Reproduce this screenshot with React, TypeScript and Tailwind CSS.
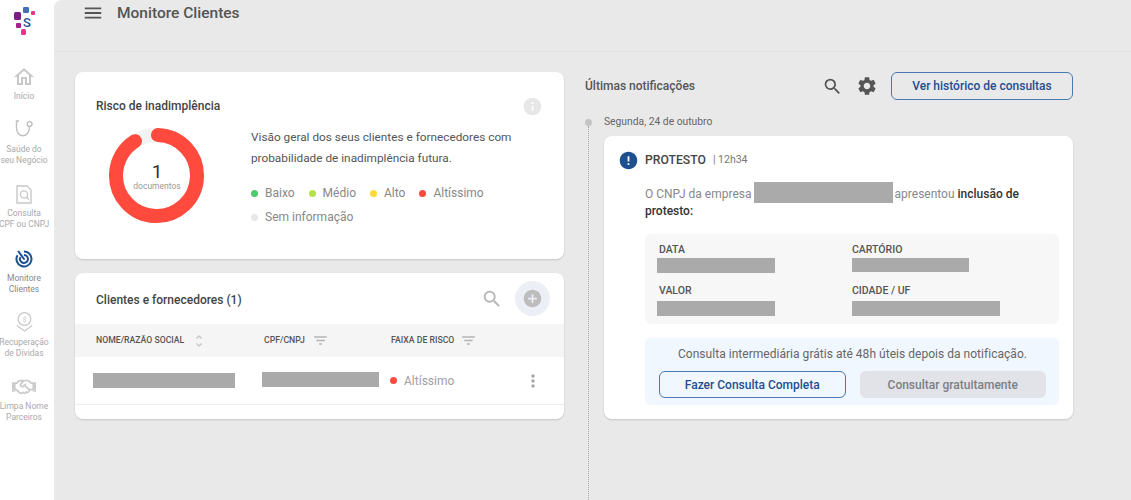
import React from 'react';
import { FaRegHandshake } from 'react-icons/fa';
import {
  MdAddCircle,
  MdError,
  MdFilterList,
  MdInfo,
  MdMenu,
  MdMoreVert,
  MdOutlineHome,
  MdSearch,
  MdSettings,
  MdUnfoldMore,
} from 'react-icons/md';

const Logo = () => (
  <svg width="22" height="29" viewBox="0 0 22 29" className="block">
    <rect x="1" y="6" width="7" height="8" rx="1.5" fill="#7b1f87" />
    <rect x="10" y="1" width="6" height="6" rx="1.2" fill="#3f6fb5" />
    <rect x="18" y="5" width="4" height="4" rx="1" fill="#e6348f" />
    <rect x="3" y="17" width="5" height="5" rx="1" fill="#a3238e" />
    <rect x="8" y="23" width="5" height="6" rx="1.5" fill="#e6348f" />
    <text x="10" y="21" fontSize="13" fontWeight="500" fill="#1d4f91" fontFamily="Roboto, sans-serif">
      S
    </text>
  </svg>
);

const StethoscopeIcon = () => (
  <svg width="18" height="17" viewBox="0 0 18 17" fill="none" stroke="#c0c0c0" strokeWidth="1.4">
    <path d="M4 1H1.5v7a6.4 7.8 0 0 0 12.8 0V6.6" />
    <circle cx="14.6" cy="4" r="2.4" />
  </svg>
);

const ConsultaIcon = () => (
  <svg width="16" height="19" viewBox="0 0 16 19" fill="none" stroke="#c8c8c8" strokeWidth="1.4">
    <path d="M1 1h10l4 4v13H1z" />
    <circle cx="8" cy="9.5" r="3.6" />
    <path d="M10.6 12.2l2.4 2.4" />
  </svg>
);

const MonitorIcon = () => (
  <svg width="18" height="18" viewBox="0 0 18 18" fill="none" stroke="#1d4f91" strokeWidth="2">
    <path d="M9 1.5A7.5 7.5 0 1 1 2.5 5.25" />
    <path d="M9 5A4 4 0 1 1 5.5 7" />
    <path d="M3.5 1.5L9 9" strokeLinecap="round" />
  </svg>
);

const RecoveryIcon = () => (
  <svg width="17" height="20" viewBox="0 0 17 20" fill="none" stroke="#c8c8c8" strokeWidth="1.3">
    <circle cx="8.5" cy="7" r="6.3" />
    <path d="M0.8 13.5l7.7 5.5 7.7-5.5" />
    <text x="8.5" y="9.5" fontSize="7" textAnchor="middle" fill="#c8c8c8" stroke="none" fontFamily="Roboto, sans-serif">
      $
    </text>
  </svg>
);

const navItems = [
  { icon: <MdOutlineHome size={24} color="#c8c8c8" />, lines: ['Início'], h: 'h-[51px]', lh: 'mt-[2px]' },
  { icon: <StethoscopeIcon />, lines: ['Saúde do', 'seu Negócio'], h: 'h-[66px]', lh: 'mt-[4px]' },
  { icon: <ConsultaIcon />, lines: ['Consulta', 'CPF ou CNPJ'], h: 'h-[65px]', lh: 'mt-[2px]' },
  { icon: <MonitorIcon />, lines: ['Monitore', 'Clientes'], h: 'h-[63px]', lh: 'mt-[2px]', active: true },
  { icon: <RecoveryIcon />, lines: ['Recuperação', 'de Dívidas'], h: 'h-[65px]', lh: 'mt-[3px]' },
  { icon: <FaRegHandshake size={24} color="#cccccc" />, lines: ['Limpa Nome', 'Parceiros'], h: 'h-[60px]', lh: 'mt-[2px]' },
];

const legend = [
  { label: 'Baixo', color: 'bg-[#4fcb6b]' },
  { label: 'Médio', color: 'bg-[#b3e34a]' },
  { label: 'Alto', color: 'bg-[#ffd93b]' },
  { label: 'Altíssimo', color: 'bg-[#ff4a3d]' },
];

const Redacted = ({ className }: { className: string }) => <div className={`bg-[#aaaaaa] shrink-0 ${className}`} />;

const Donut = () => (
  <div className="relative w-[96px] h-[96px] shrink-0">
    <svg width="96" height="96" viewBox="0 0 96 96" fill="none">
      <circle cx="47.5" cy="47.5" r="40.5" stroke="#f3f3f3" strokeWidth="14" />
      <circle
        cx="47.5"
        cy="47.5"
        r="40.5"
        stroke="#ff4a3d"
        strokeWidth="14"
        strokeLinecap="round"
        strokeDasharray="230 254.5"
        transform="rotate(-88 47.5 47.5)"
      />
    </svg>
    <div className="absolute inset-0 flex flex-col items-center justify-center">
      <span className="text-[19px] leading-[19px] text-[#333]">1</span>
      <span className="text-[8.5px] leading-[10px] text-[#999]">documentos</span>
    </div>
  </div>
);

const Field = ({ label, left, children }: { label: string; left?: boolean; children: React.ReactNode }) => (
  <div>
    <div className={`text-[10.5px] leading-[12px] font-medium text-[#555] ${left ? 'pl-[2px]' : ''}`}>{label}</div>
    {children}
  </div>
);

export default function App() {
  return (
    <div className="flex h-[500px] w-[1131px] overflow-hidden bg-white font-['Roboto',sans-serif]">
      {/* Sidebar */}
      <aside className="w-[54px] shrink-0 bg-white">
        <div className="w-[48px]">
          <div className="h-[65px] pt-[6px] flex justify-center">
            <Logo />
          </div>
          {navItems.map((item) => (
            <div key={item.lines[0]} className={`${item.h} flex flex-col items-center`}>
              <div className="h-[24px] flex items-center justify-center">{item.icon}</div>
              <div className={`${item.lh} text-center text-[8.5px] leading-[10.5px] text-[#aaa] whitespace-nowrap`}>
                {item.lines.map((l) => (
                  <div key={l} className={item.active ? 'text-[#888]' : ''}>
                    {l}
                  </div>
                ))}
              </div>
            </div>
          ))}
        </div>
      </aside>

      <main className="flex-1 flex flex-col bg-[#e9e9e9] rounded-tl-lg min-w-0">
        {/* Top bar */}
        <header className="h-[52px] shrink-0 border-b border-[#e3e3e3] flex items-start pl-[28px] pt-[2px]">
          <MdMenu size={22} color="#555" />
          <h1 className="ml-[13px] text-[15.5px] leading-[22px] font-medium text-[#555]">Monitore Clientes</h1>
        </header>

        <div className="flex-1 grid grid-cols-[489px_489px] gap-x-[21px] pl-[21px] pt-[20px] min-h-0">
          {/* Left column */}
          <div className="flex flex-col gap-[14px]">
            <section className="h-[187px] bg-white rounded-lg shadow-[0_1px_2px_rgba(0,0,0,0.15)] px-[21px] pt-[24px]">
              <div className="h-[20px] flex items-center justify-between">
                <h2 className="text-[12px] leading-[20px] font-medium text-[#444]">Risco de inadimplência</h2>
                <MdInfo size={21} color="#e7e7e7" />
              </div>
              <div className="flex mt-[12px] pl-[13px]">
                <Donut />
                <div className="ml-[46px] w-[290px] -mt-[1px]">
                  <p className="text-[11.8px] leading-[21px] text-[#555]">
                    Visão geral dos seus clientes e fornecedores com probabilidade de inadimplência futura.
                  </p>
                  <div className="mt-[12px] flex gap-x-[14px] text-[12px] leading-[24px] text-[#888]">
                    {legend.map((l) => (
                      <span key={l.label} className="flex items-center gap-[7px]">
                        <span className={`w-[7px] h-[7px] rounded-full ${l.color}`} />
                        {l.label}
                      </span>
                    ))}
                  </div>
                  <span className="flex items-center gap-[7px] text-[12px] leading-[24px] text-[#888]">
                    <span className="w-[7px] h-[7px] rounded-full bg-[#e7e7e7]" />
                    Sem informação
                  </span>
                </div>
              </div>
            </section>

            <section className="h-[146px] bg-white rounded-lg shadow-[0_1px_2px_rgba(0,0,0,0.15)]">
              <div className="h-[51px] flex items-center pl-[21px] pr-[14px]">
                <h2 className="flex-1 text-[12px] pt-[3px] font-medium text-[#444]">Clientes e fornecedores (1)</h2>
                <MdSearch size={22} color="#b5b5b5" />
                <span className="ml-[12px] w-[35px] h-[35px] rounded-full bg-[#eceff6] flex items-center justify-center">
                  <MdAddCircle size={21} color="#bdbdbd" />
                </span>
              </div>
              <div className="h-[33px] bg-[#f5f5f5] flex items-center text-[8.7px] font-medium text-[#555]">
                <span className="w-[189px] pl-[21px] flex items-center">
                  NOME/RAZÃO SOCIAL
                  <MdUnfoldMore size={16} color="#c8c8c8" className="ml-[7px]" />
                </span>
                <span className="w-[127px] flex items-center">
                  CPF/CNPJ
                  <MdFilterList size={17} color="#b5b5b5" className="ml-[7px]" />
                </span>
                <span className="flex items-center">
                  FAIXA DE RISCO
                  <MdFilterList size={17} color="#b5b5b5" className="ml-[6px]" />
                </span>
              </div>
              <div className="h-[48px] border-b border-[#eeeeee] flex items-center">
                <Redacted className="ml-[18px] w-[142px] h-[15px] mt-[-1px]" />
                <Redacted className="ml-[27px] w-[117px] h-[15px] mt-[-3px]" />
                <span className="ml-[11px] w-[7px] h-[7px] rounded-full bg-[#ff4a3d] shrink-0" />
                <span className="ml-[7px] text-[12px] text-[#a0a0a0]">Altíssimo</span>
                <MdMoreVert size={20} color="#a5a5a5" className="ml-[69px] shrink-0" />
              </div>
            </section>
          </div>

          {/* Right column */}
          <div className="flex flex-col min-h-0">
            <div className="h-[28px] flex items-center shrink-0 pr-[1px]">
              <h2 className="flex-1 text-[12px] font-medium text-[#555]">Últimas notificações</h2>
              <MdSearch size={21} color="#555" />
              <MdSettings size={22} color="#555" className="ml-[13px]" />
              <button className="ml-[13px] w-[182px] h-[28px] rounded-md border border-[#4a78b0] text-[12px] font-medium text-[#1d4f91]">
                Ver histórico de consultas
              </button>
            </div>

            <div className="flex-1 flex mt-[14px] min-h-0">
              {/* Timeline rail */}
              <div className="w-[7px] flex flex-col items-center pt-[5px]">
                <span className="w-[7px] h-[7px] rounded-full bg-[#c4c4c4] shrink-0" />
                <span className="flex-1 border-l border-dotted border-[#aaa]" />
              </div>

              <div className="ml-[12px] w-[469px]">
                <div className="pt-[1px] text-[10.3px] leading-[14px] text-[#666]">Segunda, 24 de outubro</div>
                <article className="mt-[7px] h-[283px] bg-white rounded-lg shadow-[0_1px_2px_rgba(0,0,0,0.15)] pt-[14px] pr-[14px]">
                  <div className="flex items-center pl-[14px] h-[20px]">
                    <MdError size={21} color="#1d4f91" />
                    <span className="ml-[6px] text-[12.2px] font-medium text-[#444]">PROTESTO</span>
                    <span className="ml-[7px] text-[10.5px] text-[#777]">| 12h34</span>
                  </div>
                  <div className="pl-[41px] mt-[12px] text-[12px] text-[#888]">
                    <div className="flex items-start h-[21px] leading-[18px]">
                      <span className="pt-[3px]">O CNPJ da empresa</span>
                      <Redacted className="ml-[2px] w-[139px] h-[21px]" />
                      <span className="ml-[2px] pt-[3px]">
                        apresentou <b className="font-medium text-[#333]">inclusão de</b>
                      </span>
                    </div>
                    <div className="font-medium leading-[17px] text-[#333]">protesto:</div>
                  </div>

                  <div className="ml-[41px] mt-[14px] h-[90px] rounded-md bg-[#f7f7f7] pl-[12px] pt-[10px] grid grid-cols-[195px_1fr] content-start gap-y-[12px]">
                    <Field label="DATA" left>
                      <Redacted className="mt-[2px] w-[118px] h-[15px]" />
                    </Field>
                    <Field label="CARTÓRIO">
                      <Redacted className="mt-[2px] w-[117px] h-[14px]" />
                    </Field>
                    <Field label="VALOR" left>
                      <Redacted className="mt-[4px] w-[118px] h-[15px]" />
                    </Field>
                    <Field label="CIDADE / UF">
                      <Redacted className="mt-[4px] w-[148px] h-[15px]" />
                    </Field>
                  </div>

                  <div className="ml-[41px] mt-[14px] h-[67px] rounded-md bg-[#f1f7fe] pl-[14px] pr-[13px] pt-[9px]">
                    <p className="text-center text-[12px] leading-[14px] tracking-[0.03px] text-[#666]">
                      Consulta intermediária grátis até 48h úteis depois da notificação.
                    </p>
                    <div className="mt-[10px] grid grid-cols-2 gap-[14px]">
                      <button className="h-[27px] rounded-md border border-[#4a78b0] text-[12px] font-medium text-[#1d4f91]">
                        Fazer Consulta Completa
                      </button>
                      <button className="h-[27px] rounded-md bg-[#e1e3e8] text-[12px] font-medium text-[#7c7f85]">
                        Consultar gratuitamente
                      </button>
                    </div>
                  </div>
                </article>
              </div>
            </div>
          </div>
        </div>
      </main>
    </div>
  );
}
